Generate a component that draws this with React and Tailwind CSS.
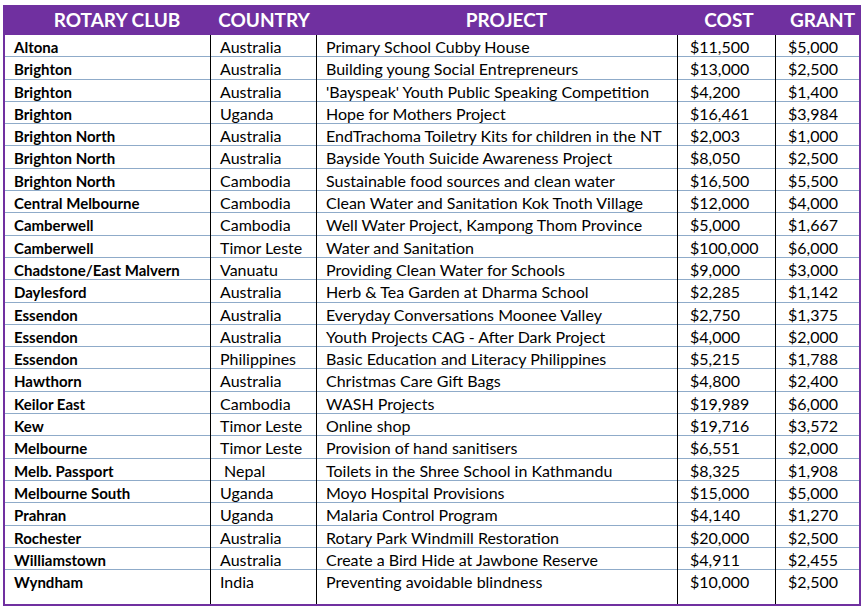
import React from "react";

const rows = [
  ["Altona", "Australia", "Primary School Cubby House", "$11,500", "$5,000"],
  ["Brighton", "Australia", "Building young Social Entrepreneurs", "$13,000", "$2,500"],
  ["Brighton", "Australia", "'Bayspeak' Youth Public Speaking Competition", "$4,200", "$1,400"],
  ["Brighton", "Uganda", "Hope for Mothers Project", "$16,461", "$3,984"],
  ["Brighton North", "Australia", "EndTrachoma Toiletry Kits for children in the NT", "$2,003", "$1,000"],
  ["Brighton North", "Australia", "Bayside Youth Suicide Awareness Project", "$8,050", "$2,500"],
  ["Brighton North", "Cambodia", "Sustainable food sources and clean water", "$16,500", "$5,500"],
  ["Central Melbourne", "Cambodia", "Clean Water and Sanitation Kok Tnoth Village", "$12,000", "$4,000"],
  ["Camberwell", "Cambodia", "Well Water Project, Kampong Thom Province", "$5,000", "$1,667"],
  ["Camberwell", "Timor Leste", "Water and Sanitation", "$100,000", "$6,000"],
  ["Chadstone/East Malvern", "Vanuatu", "Providing Clean Water for Schools", "$9,000", "$3,000"],
  ["Daylesford", "Australia", "Herb & Tea Garden at Dharma School", "$2,285", "$1,142"],
  ["Essendon", "Australia", "Everyday Conversations Moonee Valley", "$2,750", "$1,375"],
  ["Essendon", "Australia", "Youth Projects CAG - After Dark Project", "$4,000", "$2,000"],
  ["Essendon", "Philippines", "Basic Education and Literacy Philippines", "$5,215", "$1,788"],
  ["Hawthorn", "Australia", "Christmas Care Gift Bags", "$4,800", "$2,400"],
  ["Keilor East", "Cambodia", "WASH Projects", "$19,989", "$6,000"],
  ["Kew", "Timor Leste", "Online shop", "$19,716", "$3,572"],
  ["Melbourne", "Timor Leste", "Provision of hand sanitisers", "$6,551", "$2,000"],
  ["Melb. Passport", "\u00a0Nepal", "Toilets in the Shree School in Kathmandu", "$8,325", "$1,908"],
  ["Melbourne South", "Uganda", "Moyo Hospital Provisions", "$15,000", "$5,000"],
  ["Prahran", "Uganda", "Malaria Control Program", "$4,140", "$1,270"],
  ["Rochester", "Australia", "Rotary Park Windmill Restoration", "$20,000", "$2,500"],
  ["Williamstown", "Australia", "Create a Bird Hide at Jawbone Reserve", "$4,911", "$2,455"],
  ["Wyndham", "India", "Preventing avoidable blindness", "$10,000", "$2,500"],
];

const cols = "grid grid-cols-[206px_106px_361px_98px_83px]";

export default function App() {
  return (
    <div className="w-[863px] h-[607px] bg-white pt-[5px] pl-[3px] font-['Lato','Open_Sans',sans-serif] text-black">
      {/* table frame */}
      <div className="w-[858px] h-[601px] border-2 border-t-0 border-[#7030a0] flex flex-col">
        {/* header band */}
        <div className={`${cols} h-[30px] bg-[#7030a0] text-white font-bold text-[19px] items-center -mx-[2px] px-[2px]`}>
          <div className="text-center pl-[18px]">ROTARY CLUB</div>
          <div className="text-center">COUNTRY</div>
          <div className="text-center pl-[18px]">PROJECT</div>
          <div className="text-center pl-[4px]">COST</div>
          <div className="text-center pl-[10px]">GRANT</div>
        </div>

        {/* data rows */}
        {rows.map((r, i) => {
          const last = i === rows.length - 1;
          return (
            <div
              key={i}
              className={`${cols} text-[16px] leading-[21px] ${
                last ? "flex-1" : "h-[22.3px] border-b border-[#8fabc9]"
              }`}
            >
              <div className="pl-[9px] pt-[2px] text-[15px] font-bold border-r border-black">{r[0]}</div>
              <div className="pl-[9px] pt-[1px] border-r border-black whitespace-pre">{r[1]}</div>
              <div className="pl-[9px] pt-[1px] border-r border-black whitespace-nowrap">{r[2]}</div>
              <div className="pl-[12px] pt-[1px] border-r border-black">{r[3]}</div>
              <div className="pl-[12px] pt-[1px]">{r[4]}</div>
            </div>
          );
        })}
      </div>
    </div>
  );
}
